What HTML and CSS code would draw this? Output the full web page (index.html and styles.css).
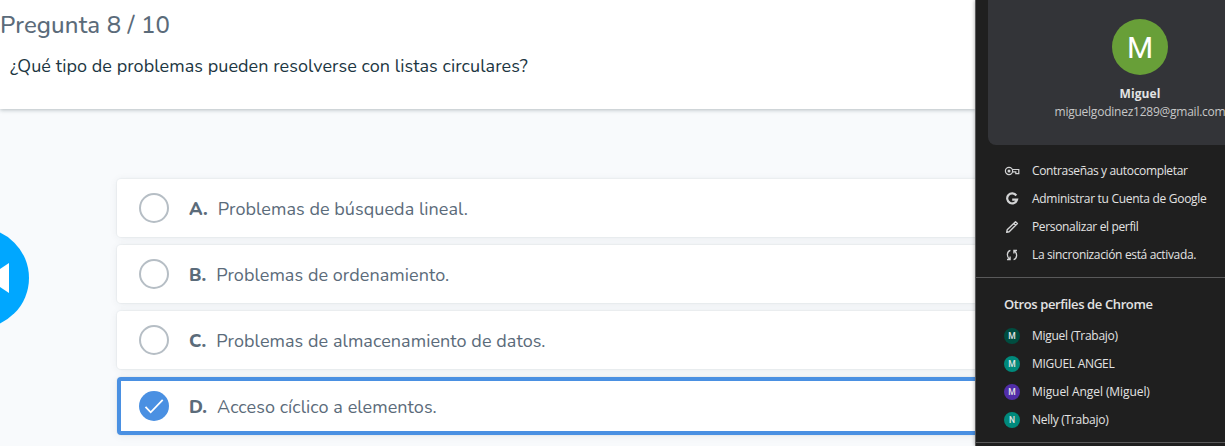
FILE: index.html
```html
<!DOCTYPE html>
<html lang="es">
<head>
<meta charset="utf-8">
<title>Pregunta 8 / 10</title>
<link rel="stylesheet" href="styles.css">
</head>
<body>
<div class="screen">
  <main class="quiz">
    <header class="question">
      <h1 class="counter">Pregunta 8 / 10</h1>
      <p class="prompt">¿Qué tipo de problemas pueden resolverse con listas circulares?</p>
    </header>
    <button class="prev" aria-label="Anterior"><svg viewBox="0 0 100 100"><path d="M7.500 50 30 35v30z" fill="#fff"/></svg></button>
    <ul class="options">
      <li class="option"><i class="radio"></i><b class="letter">A.</b><span class="answer">Problemas de búsqueda lineal.</span></li>
      <li class="option"><i class="radio"></i><b class="letter">B.</b><span class="answer">Problemas de ordenamiento.</span></li>
      <li class="option"><i class="radio"></i><b class="letter">C.</b><span class="answer">Problemas de almacenamiento de datos.</span></li>
      <li class="option selected"><i class="radio"><svg viewBox="0 0 30 30"><path d="M6.500 15.800 11.700 21.300 23.700 8.800" fill="none" stroke="#fff" stroke-width="1.800"/></svg></i><b class="letter">D.</b><span class="answer">Acceso cíclico a elementos.</span></li>
    </ul>
  </main>
  <aside class="profile">
    <section class="account">
      <div class="avatar">M</div>
      <div class="name">Miguel</div>
      <div class="email">miguelgodinez1289@gmail.com</div>
    </section>
    <ul class="menu actions">
      <li><svg viewBox="0 0 16 16"><g fill="none" stroke="#d2d3d4" stroke-width="1.200"><path d="M8.300 6.500h6.500v4.200h-3V8.800H8.500"/><circle cx="5" cy="8" r="3.600"/></g><circle cx="5" cy="8" r="1.500" fill="#d2d3d4"/></svg><span class="snug">Contraseñas y autocompletar</span></li>
      <li><svg viewBox="0 0 16 16"><path d="M12.300 4.500A5 5 0 1 0 13 8.700H8.200" fill="none" stroke="#d2d3d4" stroke-width="2.200"/></svg><span class="close">Administrar tu Cuenta de Google</span></li>
      <li><svg viewBox="0 0 16 16"><path d="M2.700 13.300 3.200 10.700 11.500 2.700 13.400 4.600 5.200 12.800zM9.800 4.400l1.900 1.900" fill="none" stroke="#d2d3d4" stroke-width="1.400" stroke-linejoin="round"/></svg><span class="snug">Personalizar el perfil</span></li>
      <li><svg viewBox="0 0 16 16"><path d="M6.400 3.400C2.700 4.500 2.500 9.300 5.400 12M3 12.500h3.100V9.600M9.600 12.600c3.700-1.100 3.900-5.900 1-8.600M13 3.500H9.900v2.900" fill="none" stroke="#d2d3d4" stroke-width="1.300"/></svg><span class="snug">La sincronización está activada.</span></li>
    </ul>
    <section class="others">
      <h2>Otros perfiles de Chrome</h2>
      <ul class="menu">
        <li><i class="dot forest">M</i><span class="near">Miguel (Trabajo)</span></li>
        <li><i class="dot teal">M</i><span class="close">MIGUEL ANGEL</span></li>
        <li><i class="dot violet">M</i><span class="wide">Miguel Angel (Miguel)</span></li>
        <li><i class="dot teal">N</i><span class="near">Nelly (Trabajo)</span></li>
      </ul>
    </section>
  </aside>
</div>
</body>
</html>
```

FILE: styles.css
```css
* { box-sizing: border-box; }
body, h1, h2, p, ul { margin: 0; padding: 0; }
ul { list-style: none; }
body { overflow: hidden; }
.screen {
  display: grid;
  grid-template-columns: 975px 250px;
  height: 446px;
  overflow: hidden;
}
.quiz {
  position: relative;
  overflow: hidden;
  background: #f8fafc;
  color: #5b6b7a;
  font-family: Nunito, Lato, sans-serif;
}
.question {
  height: 109px;
  padding-top: 9px;
  background: #fff;
  box-shadow: 0 1px 4px rgba(25, 45, 55, .3);
}
.counter {
  height: 32px;
  font-size: 24px;
  line-height: 32px;
  font-weight: 500;
  letter-spacing: .12px;
}
.prompt {
  padding: 13px 0 0 10px;
  font-size: 18px;
  line-height: 24px;
  letter-spacing: .065px;
  color: #1c3642;
  white-space: nowrap;
}
.prev {
  position: absolute;
  left: -71px;
  top: 228px;
  width: 100px;
  height: 100px;
  padding: 0;
  border: 0;
  border-radius: 50%;
  background: #00a7ff;
}
.prev svg { display: block; width: 100px; height: 100px; transform: translateX(50px); }
.options {
  display: flex;
  flex-direction: column;
  gap: 8px;
  width: 1000px;
  padding: 70px 0 0 117px;
}
.option {
  display: flex;
  align-items: center;
  height: 58px;
  padding-left: 22px;
  border-radius: 4px;
  background: #fff;
  box-shadow: 0 0 1px 1px rgba(40, 60, 65, .045), 0 1px 8px rgba(40, 60, 65, .07);
  font-size: 18px;
  line-height: 24px;
  letter-spacing: .06px;
  white-space: nowrap;
}
.option.selected { border: 4px solid #4a90e2; padding-left: 18px; }
.radio {
  flex: none;
  width: 30px;
  height: 30px;
  border: 2px solid #b6bec5;
  border-radius: 50%;
}
.selected .radio { border: 0; background: #4a90e2; }
.radio svg { display: block; width: 30px; height: 30px; }
.letter { margin: 1px 10px 0 20px; font-weight: 800; }
.answer { margin-top: 1px; }
.profile {
  position: relative;
  border-left: 1px solid #59595a;
  background: #1f1f1f;
  box-shadow: 0 0 4px rgba(0, 0, 0, .35);
  color: #e3e3e3;
  font-family: "Segoe UI", "Open Sans", sans-serif;
  font-size: 12px;
  line-height: 16px;
  white-space: nowrap;
}
.account {
  display: flex;
  flex-direction: column;
  align-items: center;
  width: 304px;
  height: 145px;
  margin-left: 12px;
  padding-top: 19px;
  border-radius: 0 0 8px 8px;
  background: #333438;
}
.avatar {
  width: 56px;
  height: 56px;
  border-radius: 50%;
  background: #689f38;
  color: #fff;
  font: 30px/57px Roboto, sans-serif;
  text-align: center;
}
.name { margin-top: 11px; font-weight: 700; letter-spacing: .1px; }
.email { margin-top: 2px; color: #c7c7c7; letter-spacing: -.24px; }
.menu li { display: flex; align-items: center; height: 28px; padding-left: 28px; }
.menu svg { width: 16px; height: 16px; margin-right: 12px; }
.snug { letter-spacing: -.35px; }
.close { letter-spacing: -.29px; }
.near { letter-spacing: -.27px; }
.wide { letter-spacing: -.08px; }
.actions { height: 132px; padding-top: 12px; }
.others { height: 166px; border: solid #59595a; border-width: 1px 0; padding-top: 18px; }
.others h2 { height: 26px; padding-left: 28px; font-size: 13px; line-height: 16px; font-weight: 600; letter-spacing: -.39px; }
.dot {
  width: 16px;
  height: 16px;
  margin-right: 12px;
  border-radius: 50%;
  font: 500 8.5px/16px Roboto, sans-serif;
  text-align: center;
}
.forest { background: #004d40; }
.teal { background: #00897b; }
.violet { background: #512da8; }
```
